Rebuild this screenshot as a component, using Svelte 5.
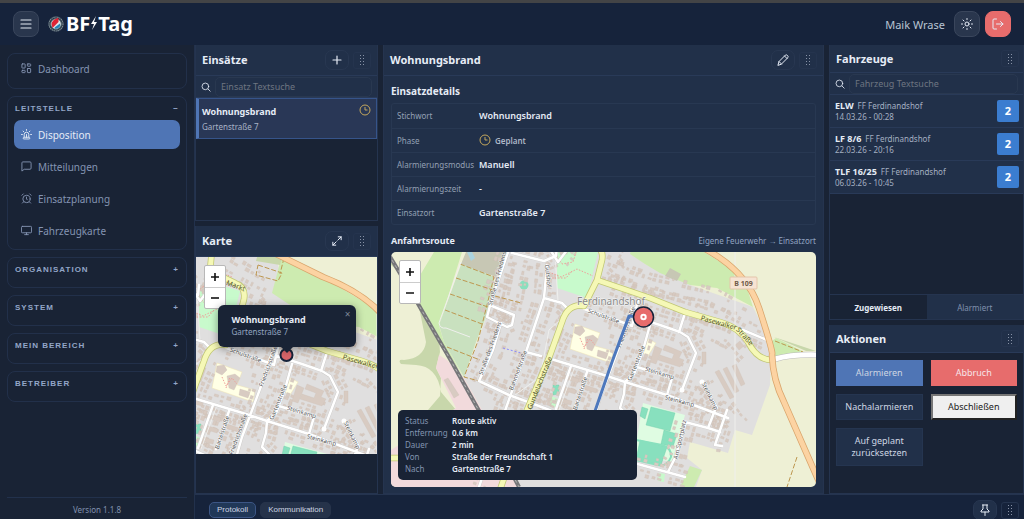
<script lang="ts">
  type Point = [number, number];

  interface Vehicle {
    name: string;
    station: string;
    time: string;
    status: number;
  }

  const navItems = [
    { label: "Disposition", icon: "siren" },
    { label: "Mitteilungen", icon: "message" },
    { label: "Einsatzplanung", icon: "alarm" },
    { label: "Fahrzeugkarte", icon: "monitor" },
  ];
  const sections = ["Organisation", "System", "Mein Bereich", "Betreiber"];

  const vehicles: Vehicle[] = [
    { name: "ELW", station: "FF Ferdinandshof", time: "14.03.26 - 00:28", status: 2 },
    { name: "LF 8/6", station: "FF Ferdinandshof", time: "22.03.26 - 20:16", status: 2 },
    { name: "TLF 16/25", station: "FF Ferdinandshof", time: "06.03.26 - 10:45", status: 2 },
  ];

  const details = [
    ["Stichwort", "Wohnungsbrand"],
    ["Phase", "Geplant"],
    ["Alarmierungsmodus", "Manuell"],
    ["Alarmierungszeit", "-"],
    ["Einsatzort", "Gartenstraße 7"],
  ];

  const route = [
    ["Status", "Route aktiv"],
    ["Entfernung", "0.6 km"],
    ["Dauer", "2 min"],
    ["Von", "Straße der Freundschaft 1"],
    ["Nach", "Gartenstraße 7"],
  ];

  let activeNav = $state("Disposition");
  let activeTab = $state("Zugewiesen");
  let activeDock = $state("Protokoll");
  let incidentSearch = $state("");
  let vehicleSearch = $state("");

  const shownVehicles = $derived(
    vehicles.filter((v) => v.name.toLowerCase().includes(vehicleSearch.toLowerCase()))
  );

  // Residential streets, both maps share this coordinate space
  const streets: Point[][] = [
    [[508, 252], [491, 302], [487, 317], [507, 327], [512, 325], [514, 315], [492, 306]],
    [[501, 323], [493, 350], [479, 381], [509, 395], [547, 409], [580, 424]],
    [[512, 253], [544, 261], [556, 256], [557, 246]],
    [[547, 265], [544, 298], [526, 352], [506, 408], [479, 487]],
    [[544, 298], [562, 303], [568, 309]],
    [[526, 352], [541, 356]],
    [[551, 359], [604, 375], [625, 382], [667, 395], [728, 418]],
    [[632, 308], [618, 350], [600, 398], [588, 440]],
    [[650, 325], [643, 350], [634, 374], [625, 382], [624, 394], [620, 408], [628, 416]],
    [[584, 309], [603, 315], [632, 326]],
    [[632, 316], [660, 325], [680, 332], [688, 337], [696, 353], [682, 390]],
    [[685, 313], [679, 332]],
    [[637, 367], [672, 378], [667, 395]],
    [[702, 382], [717, 408]],
    [[715, 410], [708, 428]],
    [[685, 422], [708, 428], [720, 432]],
    [[727, 410], [715, 445], [722, 446]],
    [[587, 372], [574, 410]],
    [[571, 366], [556, 409]],
    [[743, 330], [767, 340]],
    [[686, 422], [675, 458], [668, 472]],
    [[634, 463], [685, 477]],
    [[544, 240], [558, 262], [580, 233]],
    [[638, 300], [632, 326]],
  ];

  // Roads that only matter as a line of houses
  const houseRows: Point[][] = [
    ...streets,
    [[605, 282], [650, 297], [700, 312], [735, 323]],
    [[604, 268], [650, 284], [712, 298], [750, 318]],
    [[570, 318], [558, 340], [546, 372], [530, 408]],
    [[612, 264], [622, 273], [642, 278]],
    [[578, 222], [620, 245], [612, 262]],
    [[520, 262], [510, 310]],
    [[690, 320], [730, 338], [748, 358]],
    [[560, 372], [548, 408]],
    [[690, 395], [724, 408], [740, 428]],
  ];

  function line(points: Point[]): string {
    return "M" + points.map((p) => p.join(" ")).join("L");
  }

  function placeHouses(rows: Point[][]): string {
    let seed = 7;
    const rand = () => (seed = (seed * 16807) % 2147483647) / 2147483647;
    let d = "";
    for (const row of rows) {
      for (let i = 1; i < row.length; i++) {
        const [x1, y1] = row[i - 1];
        const [x2, y2] = row[i];
        const len = Math.hypot(x2 - x1, y2 - y1);
        const ux = (x2 - x1) / len;
        const uy = (y2 - y1) / len;
        for (let t = 3; t < len - 1; t += 6) {
          for (const side of [-9.5, -5, 5, 9.5]) {
            if (rand() < 0.35) continue;
            const w = 1 + rand() * 1.3;
            const h = 0.9 + rand();
            const cx = x1 + ux * (t + rand() * 2) - uy * side;
            const cy = y1 + uy * (t + rand() * 2) + ux * side;
            const corner = (a: number, b: number) =>
              `${(cx + ux * a - uy * b).toFixed(1)} ${(cy + uy * a + ux * b).toFixed(1)}`;
            d += `M${corner(-w, -h)}L${corner(w, -h)}L${corner(w, h)}L${corner(-w, h)}Z`;
          }
        }
      }
    }
    return d;
  }

  const streetPath = streets.map(line).join("");
  const housePath = placeHouses(houseRows);

  const detailLabels = [
    { text: "Straße des Friedens", x: 499, y: 279, angle: -75 },
    { text: "Straße des Friedens", x: 492, y: 349, angle: -70 },
    { text: "Bahnhofstraße", x: 520, y: 371, angle: -70 },
    { text: "Gutshof", x: 546, y: 276, angle: 84 },
    { text: "Am Sportplatz", x: 682, y: 440, angle: -77 },
    { text: "Gundelachstraße", x: 542, y: 384, angle: -68, road: true },
    { text: "Straße", x: 743, y: 338, angle: 48, road: true },
  ];
  const overviewLabels = [
    { text: "Markt", x: 593, y: 249, angle: 20, road: true },
    { text: "Friedrichstraße", x: 598, y: 396, angle: -70 },
  ];
  const sharedLabels = [
    { text: "Schulstraße", x: 603, y: 318, angle: 20 },
    { text: "Friedrichstraße", x: 628, y: 328, angle: -70 },
    { text: "Gartenstraße", x: 638, y: 364, angle: -68 },
    { text: "Steinkamp", x: 659, y: 375, angle: 17 },
    { text: "Steinkamp", x: 679, y: 403, angle: 15 },
    { text: "Steinkamp", x: 708, y: 397, angle: 64 },
    { text: "Bartelstraße", x: 582, y: 394, angle: -72 },
    { text: "Pasewalker", x: 718, y: 325, angle: 16, road: true },
  ];
</script>

{#snippet grip()}
  <button class="grip" type="button" aria-label="Verschieben">
    <svg viewBox="0 0 6 10" width="6" height="10">
      {#each [0, 3, 6, 9] as y}
        <rect x="1" {y} width="1" height="1" /><rect x="4" {y} width="1" height="1" />
      {/each}
    </svg>
  </button>
{/snippet}

{#snippet clock()}
  <svg class="clock" viewBox="0 0 12 12" width="12" height="12">
    <circle cx="6" cy="6" r="5" /><path d="M6 3v3h2.5" />
  </svg>
{/snippet}

{#snippet searchIcon()}
  <svg class="line-icon" viewBox="0 0 24 24" width="10" height="10">
    <circle cx="10.5" cy="10.5" r="8" /><path d="m17 17 5 5" />
  </svg>
{/snippet}

{#snippet navIcon(name: string)}
  <svg class="line-icon" viewBox="0 0 24 24" width="11" height="11">
    {#if name === "siren"}
      <path d="M7 18v-6a5 5 0 0 1 10 0v6M5 21a2 2 0 0 1 2-3h10a2 2 0 0 1 2 3zM12 12v6M21 12h2M1 12h2M12 1v2M4.5 4.5 6 6M19.5 4.5 18 6" />
    {:else if name === "message"}
      <path d="M22 16a2 2 0 0 1-2 2H7l-5 4V4a2 2 0 0 1 2-2h16a2 2 0 0 1 2 2z" />
    {:else if name === "alarm"}
      <circle cx="12" cy="13" r="8" /><path d="M12 9v4l2 2M5 2 2 5M22 5l-3-3M6 19l-3 3M18 19l3 3" />
    {:else if name === "monitor"}
      <rect x="1" y="3" width="22" height="14" rx="2" /><path d="M8 21h8M12 17v4" />
    {:else}
      <rect x="2" y="2" width="7" height="9" rx="1" /><rect x="14" y="2" width="7" height="5" rx="1" />
      <rect x="14" y="12" width="7" height="9" rx="1" /><rect x="2" y="16" width="7" height="5" rx="1" />
    {/if}
  </svg>
{/snippet}

{#snippet zoomControl()}
  <div class="zoom-control">
    <button type="button" aria-label="Vergrößern"><svg viewBox="0 0 8 8" width="8" height="8"><path d="M4 0v8M0 4h8" /></svg></button>
    <button type="button" aria-label="Verkleinern"><svg viewBox="0 0 8 8" width="8" height="8"><path d="M0 4h8" /></svg></button>
  </div>
{/snippet}

{#snippet baseMap(labels)}
  <rect x="380" y="200" width="460" height="310" fill="#eef0d5" />
  <!-- Settlement -->
  <path fill="#e0dfdf" d="M505 200H630L645 264L690 285L753 307L772 345L770 385L752 435L735 430L728 453L690 442L687 458L702 470L696 487H470L481 408L464 378L492 302Z" />
  <!-- Meadows, scrub and allotments -->
  <path fill="#cdebb0" d="M434 252H462L439 326L444 342L464 378L410 292ZM640 216L630 254L645 264L660 273L690 285L717 288L753 307L747 288L730 268L681 238ZM772 341L776 338L806 353L772 358ZM690 466L702 470L694 487H680ZM419 481L445 479L448 487H422Z" />
  <path fill="#c8d7ab" d="M391 258L410 292L439 338L440 352L436 368L441 378L440 396L428 410H456L441 392Q437 366 416 365L401 364Q397 359 404 360Q424 358 426 342L420 312Q410 280 391 265ZM620 200H645L638 226L614 222ZM774 337L816 351H806Z" />
  <path fill="#c9e1bf" d="M462 262L494 277L492 302L476 342L464 377L444 342L439 325Z" />
  <path fill="#c7c7b4" d="M466 252H507L496 277L461 264ZM670 268L681 274L677 281L665 276Z" />
  <path fill="#aad3df" d="M467 252h5l3 6l-4 3z" />
  <path fill="#f2dadc" d="M439 355L447 360L464 378L481 408L520 487H391V450L402 443L456 408L436 368Z" />
  <path fill="#c8facc" d="M557 250L568 243L598 252L587 298L557 288ZM550 395l8 4-1 9-8-2zM659 473l6 1-1 8-6-1z" />
  <path fill="#ffffe5" d="M575 324L600 333L595 346L613 351L611 363L570 349ZM648 339L656 343L648 356L643 353Z" stroke="#eee3b5" stroke-width="0.5" />
  <!-- Sports ground -->
  <path fill="#dffce2" d="M643 403L685 415L672 462L634 455Z" />
  <path fill="#88e0be" stroke="#6fcdaa" stroke-width="0.4" d="M651 407L675 413L670 431L646 425ZM642 407L648 409L645 419L640 416ZM664 430L677 434L673 447L661 444ZM640 440L667 447L661 465L636 460ZM553 385h6v9l-6 1z" />
  <path fill="none" stroke="#88e0be" stroke-width="2" d="M636 440L662 445Q672 448 671 457Q667 467 658 465L636 460" />
  <circle cx="524" cy="285" r="4.5" fill="#88e0be" />
  <!-- Buildings -->
  <path class="houses" d={housePath} />
  <path class="houses" d="M575 327l7-1 3 5-5 5-6-3zM585 337l8-2 5 4-6 12-5-2zM598 350l10 3-2 6-9-3zM655 346l7 3-6 15-6-2zM665 345l17 7-3 6 5 2-4 7-22-7 2-5 12 4 2-5-11-4zM702 352h4v12h-4zM715 372l4-2 15 27-4 2zM723 369l4-2 12 24-4 2zM732 366l4-2 9 20-4 2zM444 380l4-2 11 17-5 3zM560 328l4 1-5 14-3-1zM553 361l9 2-2 4-8-2zM565 375l14 4-1 4-14-4zM563 386l13 4-1 4-13-4zM560 398l12 3-1 4-12-3zM585 385l12 4-1 4-12-4zM735 345l5-4 4 5-5 4z" />
  <path class="park-dots" d="M549 272l12 5 16-8 16 7M552 278h14l6-7M580 338l4 9 6-8 5 6M584 349l4-11M558 250l11-8 8 7-4 13-11 2-6-9zM572 230l18 8" />
  <path class="allotment-path" d="M460 264l34 13-16 64-14 36 15 4M456 278l37 12M450 294l38 13M445 310l37 14M447 347l33 13M495 296l26 7M797 457l-10 30M775 341l28 11M616 226l24 8-4 8-22-6zM642 219l-4 16" />
  <path fill="none" stroke="#8a8aff" stroke-dasharray="2 2" d="M503 348l18 5" />
  <path class="lane" d="M461 262l-22 61q1 6 7 5l24 9M555 252l3 50M571 310l-22 20-9 47-25 18M735 252v235M575 366l-16 44" />
  <!-- Railway -->
  <path class="railway" d="M389 255L410 290L450 359L478 409L519 487" />
  <path class="railway-dash" d="M389 255L410 290L450 359L478 409L519 487" />
  <!-- Streets -->
  <path class="street-casing" d={streetPath} />
  <path class="street" d={streetPath} />
  <circle cx="682" cy="390" r="2.5" fill="#fff" /><circle cx="702" cy="382" r="2.5" fill="#fff" />
  <path class="main-casing" d="M380 458H410M571 200L568 232L593 244Q604 248 602 260L597 280L584 306Q568 303 562 322L549 358L527 410L500 490M597 280L650 298L685 312L720 322Q740 328 748 342Q757 360 772 360" />
  <path class="main" d="M380 458H410M571 200L568 232L593 244Q604 248 602 260L597 280L584 306Q568 303 562 322L549 358L527 410L500 490M597 280L650 298L685 312L720 322Q740 328 748 342Q757 360 772 360" />
  <path fill="none" stroke="#bbb" stroke-width="6" d="M775 359Q792 354 820 355" />
  <path fill="none" stroke="#fff" stroke-width="5" d="M775 359Q792 354 820 355" />
  <path class="highway-casing" d="M620 208L681 238Q744 262 759 308T772 355Q773 380 784 402L820 484" />
  <path class="highway" d="M620 208L681 238Q744 262 759 308T772 355Q773 380 784 402L820 484" />
  {#each [...sharedLabels, ...labels] as label}
    <text class="street-label" class:road={label.road} x={label.x} y={label.y} transform="rotate({label.angle} {label.x} {label.y})">{label.text}</text>
  {/each}
{/snippet}

<div class="app">
  <header class="topbar">
    <button class="square-btn" type="button" aria-label="Menü">
      <svg class="line-icon" viewBox="0 0 12 12" width="12" height="12"><path class="thin" d="M1 2h10M1 6h10M1 10h10" /></svg>
    </button>
    <a class="brand" href="/">
      <svg viewBox="0 0 16 16" width="16" height="16">
        <circle cx="8" cy="8" r="7" fill="#22303f" stroke="#7f8f95" stroke-width="1.2" stroke-dasharray="1.5 0.5" />
        <circle cx="8" cy="8" r="5.3" fill="#dfe7ea" stroke="#587078" />
        <path fill="#df2435" d="M9.500 2Q4 4 3.500 8l1 4 6-6V2.500z" />
        <path fill="#2584b8" d="M12 7.500Q13 12 7.500 13l-1-1.500z" />
      </svg>
      <span class="brand-name">BF<svg viewBox="0 0 8 16" width="8" height="16"><path fill="#fff" d="M6 1 1 9h3L2 15l5-8H4z" /></svg>Tag</span>
    </a>
    <span class="user">Maik Wrase</span>
    <button class="square-btn" type="button" aria-label="Design wechseln">
      <svg class="line-icon" viewBox="0 0 24 24" width="12" height="12">
        <circle cx="12" cy="12" r="4" />
        <path d="M12 1v2M12 21v2M1 12h2M21 12h2M4 4l2 2M18 18l2 2M20 4l-2 2M6 18l-2 2" />
      </svg>
    </button>
    <button class="square-btn logout" type="button" aria-label="Abmelden">
      <svg class="line-icon" viewBox="0 0 24 24" width="12" height="12"><path d="M9 22H4a2 2 0 0 1-2-2V4a2 2 0 0 1 2-2h5M9 12h13M17 7l5 5-5 5" /></svg>
    </button>
  </header>

  <aside class="sidebar">
    <nav>
      <div class="nav-card single">
        <button class="nav-item" type="button">{@render navIcon("dashboard")}Dashboard</button>
      </div>
      <div class="nav-card open">
        <button class="section-head" type="button"><span>Leitstelle</span><span>−</span></button>
        <div class="nav-list">
          {#each navItems as item}
            <button class="nav-item" class:active={activeNav === item.label} type="button" onclick={() => (activeNav = item.label)}>
              {@render navIcon(item.icon)}{item.label}
            </button>
          {/each}
        </div>
      </div>
      {#each sections as section}
        <div class="nav-card">
          <button class="section-head" type="button"><span>{section}</span><span>+</span></button>
        </div>
      {/each}
    </nav>
    <footer>Version 1.1.8</footer>
  </aside>

  <main class="board">
    <div class="column left">
      <section class="panel">
        <div class="panel-head">
          <h2>Einsätze</h2>
          <button class="head-btn" type="button" aria-label="Einsatz anlegen">
            <svg class="line-icon" viewBox="0 0 10 10" width="10" height="10"><path class="thin" d="M5 1v8M1 5h8" /></svg>
          </button>
          {@render grip()}
        </div>
        <label class="search">
          {@render searchIcon()}
          <input type="text" placeholder="Einsatz Textsuche" aria-label="Einsatz Textsuche" bind:value={incidentSearch} />
        </label>
        <button class="incident" type="button">
          <span class="incident-text"><strong>Wohnungsbrand</strong><span>Gartenstraße 7</span></span>
          {@render clock()}
        </button>
      </section>

      <section class="panel">
        <div class="panel-head">
          <h2>Karte</h2>
          <button class="head-btn" type="button" aria-label="Karte vergrößern">
            <svg class="line-icon" viewBox="0 0 12 12" width="10" height="10"><path class="thin" d="M7 5l4-4M7.5 1H11v3.5M5 7l-4 4M1 7.5V11h3.5" /></svg>
          </button>
          {@render grip()}
        </div>
        <div class="map overview">
          <svg class="map-canvas" viewBox="554 218 181 197" preserveAspectRatio="xMidYMid slice">
            {@render baseMap(overviewLabels)}
            <circle cx="644.5" cy="316" r="6" fill="#d76469" stroke="#17233a" stroke-width="2" />
          </svg>
          {@render zoomControl()}
          <div class="popup">
            <strong>Wohnungsbrand</strong>
            <span>Gartenstraße 7</span>
            <button type="button" aria-label="Schließen">×</button>
          </div>
        </div>
      </section>
    </div>

    <section class="panel detail">
      <div class="panel-head">
        <h2>Wohnungsbrand</h2>
        <button class="head-btn" type="button" aria-label="Einsatz bearbeiten">
          <svg class="line-icon" viewBox="0 0 24 24" width="12" height="12"><path d="M2 22l2-7L17 2q2-1 4 1t1 4L9 20zM15 4l5 5M4 15l5 5" /></svg>
        </button>
        {@render grip()}
      </div>
      <div class="detail-body">
        <h3>Einsatzdetails</h3>
        <div class="table-frame">
          <table>
            <tbody>
              {#each details as [label, value]}
                <tr>
                  <th scope="row">{label}</th>
                  <td>
                    {#if label === "Phase"}
                      <span class="phase">{@render clock()}{value}</span>
                    {:else}
                      {value}
                    {/if}
                  </td>
                </tr>
              {/each}
            </tbody>
          </table>
        </div>
        <div class="route-head">
          <h4>Anfahrtsroute</h4>
          <span>Eigene Feuerwehr → Einsatzort</span>
        </div>
        <div class="map route-map">
          <svg class="map-canvas" viewBox="391 252 425 235" preserveAspectRatio="xMidYMid slice">
            {@render baseMap(detailLabels)}
            <rect x="730" y="277" width="27" height="12" rx="1" fill="#f6e3d3" stroke="#e4c5aa" />
            <text class="shield" x="743.5" y="286">B 109</text>
            <text class="town" x="611" y="305">Ferdinandshof</text>
            <path class="route-line" d="M643 317L629 316L612 362L585 440" />
            <circle cx="643.5" cy="317" r="10" fill="#e76c6c" stroke="#17233a" stroke-width="1.5" />
            <circle cx="643.5" cy="317" r="2.2" fill="#e76c6c" stroke="#fff" stroke-width="2" />
          </svg>
          {@render zoomControl()}
          <dl class="route-info">
            {#each route as [label, value]}
              <dt>{label}</dt>
              <dd>{value}</dd>
            {/each}
          </dl>
        </div>
      </div>
    </section>

    <div class="column right">
      <section class="panel vehicles">
        <div class="panel-head compact">
          <h2>Fahrzeuge</h2>
          {@render grip()}
        </div>
        <label class="search">
          {@render searchIcon()}
          <input type="text" placeholder="Fahrzeug Textsuche" aria-label="Fahrzeug Textsuche" bind:value={vehicleSearch} />
        </label>
        <ul>
          {#each shownVehicles as vehicle}
            <li>
              <div>
                <p><strong>{vehicle.name}</strong>{vehicle.station}</p>
                <time>{vehicle.time}</time>
              </div>
              <span class="status">{vehicle.status}</span>
            </li>
          {/each}
        </ul>
        <div class="tabs">
          {#each ["Zugewiesen", "Alarmiert"] as tab}
            <button type="button" class:active={activeTab === tab} onclick={() => (activeTab = tab)}>{tab}</button>
          {/each}
        </div>
      </section>

      <section class="panel">
        <div class="panel-head compact">
          <h2>Aktionen</h2>
          {@render grip()}
        </div>
        <div class="actions">
          <button class="primary" type="button">Alarmieren</button>
          <button class="danger" type="button">Abbruch</button>
          <button type="button">Nachalarmieren</button>
          <button class="plain" type="button">Abschließen</button>
          <button type="button">Auf geplant zurücksetzen</button>
        </div>
      </section>
    </div>
  </main>

  <footer class="dock">
    {#each ["Protokoll", "Kommunikation"] as tab}
      <button class="dock-tab" class:active={activeDock === tab} type="button" onclick={() => (activeDock = tab)}>{tab}</button>
    {/each}
    <button class="head-btn pin" type="button" aria-label="Anheften">
      <svg class="line-icon" viewBox="0 0 24 24" width="12" height="12"><path d="M12 16v7M7 2h10M8 2v8l-4 4v2h16v-2l-4-4V2" /></svg>
    </button>
    {@render grip()}
  </footer>
</div>

<style>
  :global(body) {
    background: #192335;
    color: #e6ecf6;
    font-family: "Segoe UI", "Noto Sans", sans-serif;
  }

  .app {
    display: grid;
    grid-template: auto minmax(0, 1fr) auto / 195px minmax(0, 1fr);
    height: 100vh;
    overflow: hidden;
    box-sizing: border-box;
    border-top: 3px solid #434446;
    background: #192335;
  }

  .app :global(*) {
    box-sizing: border-box;
  }

  button,
  input {
    font-family: inherit;
    cursor: pointer;
  }

  h2,
  h3,
  h4,
  p,
  ul,
  dl,
  dd {
    margin: 0;
    padding: 0;
  }

  .line-icon {
    flex: none;
    fill: none;
    stroke: currentColor;
    stroke-width: 2;
    stroke-linecap: round;
    stroke-linejoin: round;
  }

  .line-icon .thin {
    stroke-width: 1.2;
  }

  .clock {
    flex: none;
    fill: none;
    stroke: #c5a85d;
  }

  /* Top bar */
  .topbar {
    grid-column: 1 / -1;
    display: flex;
    align-items: center;
    gap: 5px;
    height: 42px;
    padding: 0 13px;
    background: #16233b;
  }

  .square-btn {
    display: grid;
    place-items: center;
    width: 26px;
    height: 26px;
    padding: 0;
    border: 1px solid #3a465c;
    border-radius: 8px;
    background: #29364d;
    color: #e6ecf6;
  }

  .square-btn.logout {
    border-color: #e76c6c;
    background: #e76c6c;
  }

  .brand {
    display: flex;
    align-items: center;
    gap: 2px;
    margin-right: auto;
    padding-left: 4px;
    color: #fff;
    text-decoration: none;
  }

  .brand-name {
    font-size: 20px;
    font-weight: 700;
    line-height: 24px;
  }

  .user {
    margin-right: 4px;
    color: #b9c3d3;
    font-size: 11px;
  }

  /* Sidebar */
  .sidebar {
    grid-row: 2 / 4;
    display: flex;
    flex-direction: column;
    justify-content: space-between;
    padding: 8px 7px 0;
    border-right: 1px solid #22314c;
  }

  .sidebar nav {
    display: flex;
    flex-direction: column;
    gap: 7px;
  }

  .nav-card {
    height: 31px;
    padding: 0 6px;
    border: 1px solid #22304a;
    border-radius: 8px;
  }

  .nav-card.single {
    height: 36px;
  }

  .nav-card.open {
    height: auto;
    padding-bottom: 4px;
  }

  .section-head {
    display: flex;
    justify-content: space-between;
    width: 100%;
    height: 23px;
    padding: 0 1px;
    border: 0;
    background: none;
    color: #93a6c8;
    font: bold 8px/23px "Liberation Sans", sans-serif;
    letter-spacing: 1px;
    text-transform: uppercase;
  }

  .nav-list {
    display: flex;
    flex-direction: column;
    gap: 3px;
  }

  .nav-item {
    display: flex;
    align-items: center;
    gap: 6px;
    width: 100%;
    height: 29px;
    padding: 0 7px;
    border: 0;
    border-radius: 7px;
    background: none;
    color: #8494b2;
    font-size: 10px;
  }

  .nav-item.active {
    background: #4f75b5;
    color: #e6ecf6;
  }

  .sidebar footer {
    height: 22px;
    border-top: 1px solid #22314c;
    color: #8091ae;
    font-size: 8px;
    line-height: 24px;
    text-align: center;
  }

  /* Board */
  .board {
    display: grid;
    grid-template-columns: 183fr 441fr 195fr;
    gap: 5px;
  }

  .column {
    display: grid;
    gap: 5px;
    min-height: 0;
  }

  .column.left {
    grid-template-rows: 176fr 268fr;
  }

  .column.right {
    grid-template-rows: 276fr 169fr;
  }

  .panel {
    display: flex;
    flex-direction: column;
    min-width: 0;
    min-height: 0;
    border: 1px solid #25344f;
    border-width: 0 1px 1px;
    background: #192335;
  }

  .panel-head {
    display: flex;
    align-items: center;
    gap: 4px;
    flex: none;
    height: 31px;
    padding: 0 6px;
    border-bottom: 1px solid #293a58;
    background: #213049;
  }

  .panel-head.compact {
    height: 28px;
    padding-right: 4px;
  }

  h2 {
    flex: 1;
    font-size: 11px;
    line-height: 16px;
  }

  .head-btn {
    display: grid;
    place-items: center;
    width: 24px;
    height: 20px;
    padding: 0;
    border: 1px solid #283751;
    border-radius: 7px;
    background: none;
    color: #e6ecf6;
  }

  .grip {
    display: grid;
    place-items: center;
    width: 18px;
    height: 17px;
    padding: 0;
    border: 1px solid #25344e;
    border-radius: 3px;
    background: none;
  }

  .grip svg {
    fill: #8792a6;
  }

  .search {
    display: flex;
    align-items: center;
    flex: none;
    gap: 4px;
    height: 22px;
    padding: 0 5px;
    border-bottom: 1px solid #293a58;
    background: #213049;
  }

  .search input {
    flex: 1;
    min-width: 0;
    height: 20px;
    padding: 0 5px;
    border: 1px solid #293850;
    border-radius: 5px;
    outline: 0;
    background: none;
    color: #e6ecf6;
    font-size: 9px;
  }

  .search input::placeholder {
    color: #6e7581;
  }

  .incident {
    display: flex;
    justify-content: space-between;
    flex: none;
    padding: 5px 5px 4px 3px;
    border: 1px solid #36548a;
    border-left: 3px solid #4f75b5;
    background: #293756;
    color: #e6ecf6;
    text-align: left;
  }

  .incident-text {
    display: flex;
    flex-direction: column;
    color: #a9b4c7;
    font-size: 8px;
    line-height: 15px;
  }

  .incident strong {
    color: #e6ecf6;
    font-size: 9px;
  }

  /* Maps */
  .map {
    position: relative;
    overflow: hidden;
  }

  .overview {
    aspect-ratio: 181 / 197;
  }

  .map-canvas {
    display: block;
    width: 100%;
    height: 100%;
  }

  .houses {
    fill: #d8cbc2;
    stroke: #cdbeb4;
    stroke-width: 0.3;
  }

  .park-dots,
  .allotment-path,
  .lane,
  .railway,
  .railway-dash,
  .street,
  .street-casing,
  .main,
  .main-casing,
  .highway,
  .highway-casing,
  .route-line {
    fill: none;
    stroke-linejoin: round;
  }

  .park-dots {
    stroke: #ef9f99;
    stroke-dasharray: 1.5 1.5;
  }

  .allotment-path {
    stroke: #bd9750;
    stroke-dasharray: 5 2;
  }

  .lane {
    stroke: #efefed;
    stroke-width: 1;
  }

  .railway {
    stroke: #77777a;
    stroke-width: 4;
  }

  .railway-dash {
    stroke: #b5b5b5;
    stroke-width: 1;
    stroke-dasharray: 3 3;
  }

  .street {
    stroke: #fff;
    stroke-width: 2.5;
    stroke-linecap: round;
  }

  .street-casing {
    stroke: #cbc9c7;
    stroke-width: 3.3;
  }

  .main {
    stroke: #f5f8b6;
    stroke-width: 5;
  }

  .main-casing {
    stroke: #c1c774;
    stroke-width: 6.5;
  }

  .highway {
    stroke: #fcd3a2;
    stroke-width: 5;
  }

  .highway-casing {
    stroke: #d9a56c;
    stroke-width: 6.5;
  }

  .route-line {
    stroke: #4d78bd;
    stroke-width: 3;
  }

  .street-label,
  .shield,
  .town {
    fill: #555;
    font-size: 6px;
    text-anchor: middle;
    paint-order: stroke;
    stroke: #ffffffb0;
    stroke-width: 1;
  }

  .street-label.road {
    fill: #55572e;
    font-size: 7px;
    stroke: none;
  }

  .shield {
    fill: #6f5a48;
    font-size: 7px;
    font-weight: 700;
    stroke: none;
  }

  .town {
    fill: #898989;
    font-size: 10px;
  }

  .zoom-control {
    position: absolute;
    top: 8px;
    left: 8px;
    display: grid;
    width: 22px;
    border: 1px solid #b8b8b8;
    border-radius: 2px;
    background: #fff;
  }

  .zoom-control button {
    display: grid;
    place-items: center;
    height: 21px;
    padding: 0;
    border: 0;
    background: none;
  }

  .zoom-control button + button {
    border-top: 1px solid #ccc;
  }

  .zoom-control svg {
    stroke: #111;
    stroke-width: 1.6;
  }

  .popup {
    position: absolute;
    top: 48px;
    left: 50%;
    display: flex;
    flex-direction: column;
    width: 138px;
    padding: 9px 14px 9px;
    border-radius: 6px;
    background: #192335;
    box-shadow: 0 2px 8px #0006;
    color: #93a3c0;
    font-size: 8px;
    line-height: 12px;
    transform: translateX(-50%);
  }

  .popup::after {
    content: "";
    position: absolute;
    top: 100%;
    left: 50%;
    border: 6px solid transparent;
    border-top-color: #192335;
    border-bottom: 0;
    transform: translateX(-50%);
  }

  .popup strong {
    color: #e6ecf6;
    font-size: 9px;
  }

  .popup button {
    position: absolute;
    top: 3px;
    right: 4px;
    padding: 0 1px;
    border: 0;
    background: none;
    color: #7d8797;
    font-size: 10px;
    line-height: 12px;
  }

  /* Incident detail */
  .detail {
    background: #213049;
  }

  .detail-body {
    display: flex;
    flex-direction: column;
    flex: 1;
    min-height: 0;
    padding: 7px 7px 6px;
  }

  h3 {
    font-size: 10px;
    line-height: 16px;
  }

  .table-frame {
    margin-top: 4px;
    border: 1px solid #283852;
    border-radius: 3px;
  }

  table {
    width: 100%;
    border-collapse: collapse;
    font-size: 9px;
  }

  tr + tr {
    border-top: 1px solid #283852;
  }

  th,
  td {
    height: 24px;
    padding: 0;
  }

  th {
    width: 87px;
    padding-left: 5px;
    color: #94a0b4;
    font-size: 8px;
    font-weight: 400;
    text-align: left;
  }

  td {
    font-weight: 600;
  }

  .phase {
    display: flex;
    align-items: center;
    gap: 4px;
    color: #adb7c7;
    font-size: 8px;
  }

  .route-head {
    display: flex;
    align-items: center;
    justify-content: space-between;
    margin: 8px 0 3px;
    color: #91a3c1;
    font-size: 8px;
    line-height: 16px;
  }

  h4 {
    color: #e6ecf6;
    font-size: 9px;
  }

  .route-map {
    flex: 1;
    min-height: 0;
    border-radius: 5px;
  }

  .route-info {
    position: absolute;
    left: 7px;
    bottom: 7px;
    display: grid;
    grid-template-columns: 47px 1fr;
    width: 239px;
    padding: 5px 7px;
    border-radius: 5px;
    background: #192335;
    color: #8293b0;
    font-size: 8px;
    line-height: 12px;
  }

  .route-info dd {
    color: #e6ecf6;
    font-weight: 600;
  }

  /* Vehicles */
  .vehicles ul {
    flex: 1;
    list-style: none;
  }

  .vehicles li {
    display: flex;
    align-items: center;
    justify-content: space-between;
    height: 33px;
    padding: 0 4px 0 5px;
    border-bottom: 1px solid #293a58;
    background: #213049;
    color: #a4afc1;
    font-size: 8px;
    line-height: 11px;
  }

  .vehicles strong {
    margin-right: 4px;
    color: #e6ecf6;
    font-size: 9px;
  }

  .vehicles time {
    display: block;
  }

  .status {
    width: 22px;
    height: 22px;
    border-radius: 2px;
    background: #3b7dd0;
    color: #fff;
    font-size: 11px;
    font-weight: 700;
    line-height: 22px;
    text-align: center;
  }

  .tabs {
    display: flex;
    height: 25px;
    border-top: 1px solid #25344f;
  }

  .tabs button {
    flex: 1;
    border: 0;
    background: #213049;
    color: #8091ae;
    font-size: 8px;
  }

  .tabs .active {
    background: #192335;
    color: #e6ecf6;
    font-weight: 700;
  }

  .actions {
    display: grid;
    grid-template-columns: 1fr 1fr;
    gap: 8px;
    padding: 7px 6px;
  }

  .actions button {
    min-height: 26px;
    padding: 6px 8px;
    border: 1px solid #253550;
    background: #213049;
    color: #ced6e3;
    font-size: 9px;
    line-height: 12px;
  }

  .actions .primary {
    border-color: #4f75b5;
    background: #4f75b5;
  }

  .actions .danger {
    border-color: #e76c6c;
    background: #e76c6c;
    color: #f6e4e8;
  }

  .actions .plain {
    padding: 5px 7px;
    border: 2px outset #767676;
    background: #efefef;
    color: #222;
  }

  /* Dock */
  .dock {
    display: flex;
    align-items: center;
    gap: 4px;
    height: 25px;
    padding: 6px 5px 0 14px;
    border-top: 1px solid #25344f;
    background: #16233b;
  }

  .dock-tab {
    height: 16px;
    padding: 0 7px;
    border: 1px solid #26334a;
    border-radius: 5px;
    background: #26334a;
    color: #ced6e3;
    font: 8px/12px "Liberation Sans", sans-serif;
  }

  .dock-tab.active {
    border-color: #3c5685;
    background: #213858;
  }

  .pin {
    margin-left: auto;
    background: #213049;
  }
</style>
